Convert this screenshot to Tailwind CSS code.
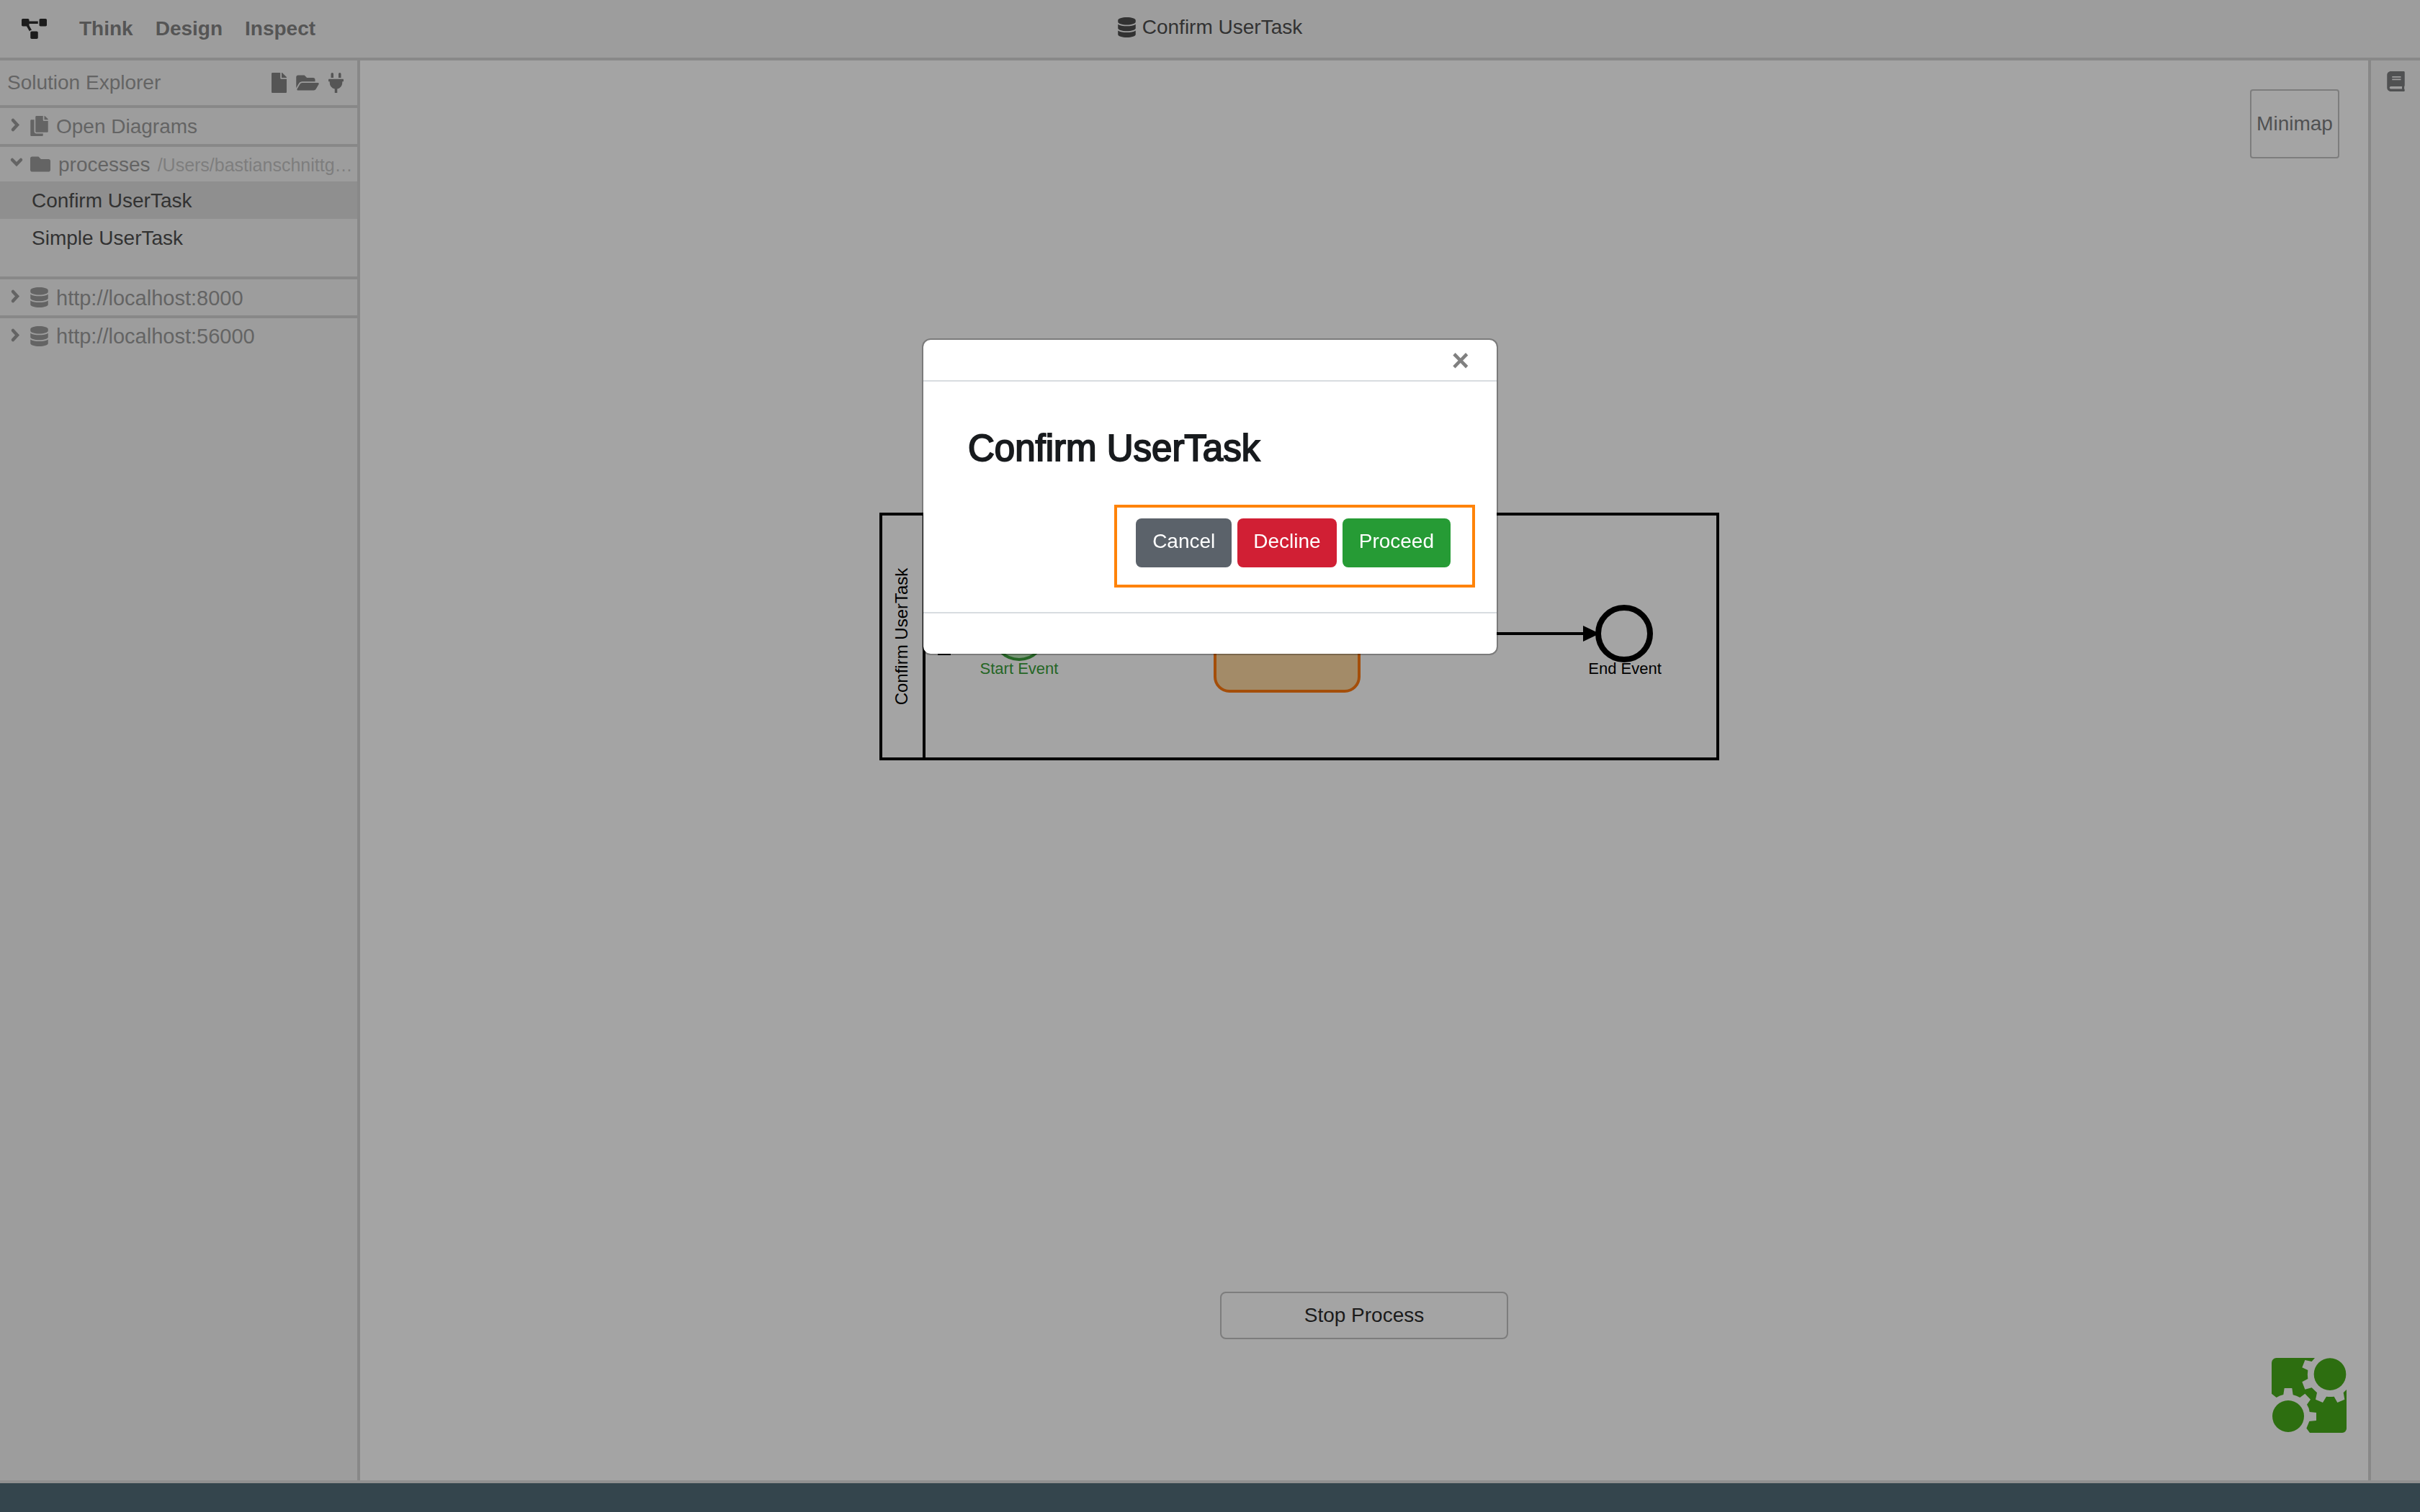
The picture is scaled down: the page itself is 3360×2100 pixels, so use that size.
<!DOCTYPE html>
<html lang="en">
<head>
<meta charset="utf-8">
<title>Confirm UserTask</title>
<script src="https://cdn.jsdelivr.net/npm/@tailwindcss/browser@4"></script>
</head>
<body class="font-['Liberation_Sans',Arial,sans-serif] text-[28px] leading-8 text-[#323232]">
<svg class="hidden" aria-hidden="true">
  <symbol id="database" viewBox="0 0 448 512"><path d="M448 73.143v45.714C448 159.143 347.667 192 224 192S0 159.143 0 118.857V73.143C0 32.857 100.333 0 224 0s224 32.857 224 73.143zM448 176v102.857C448 319.143 347.667 352 224 352S0 319.143 0 278.857V176c48.125 33.143 136.208 48.572 224 48.572S399.874 209.143 448 176zm0 160v102.857C448 479.143 347.667 512 224 512S0 479.143 0 438.857V336c48.125 33.143 136.208 48.572 224 48.572S399.874 369.143 448 336z"/></symbol>
  <symbol id="chevron-right" viewBox="0 0 20 28"><path d="M5 6l6 6.500-6 6.500" fill="none" stroke="currentColor" stroke-width="4.500" stroke-linecap="round" stroke-linejoin="miter"/></symbol>
  <symbol id="chevron-down" viewBox="0 0 20 28"><path d="M4 8l6 6 6-6" fill="none" stroke="currentColor" stroke-width="4.500" stroke-linecap="round" stroke-linejoin="miter"/></symbol>
</svg>

<div class="flex h-screen flex-col bg-[#9d9d9d]">
  <header class="grid h-[84px] shrink-0 grid-cols-[1fr_auto_1fr] items-center border-b-4 border-[#888888]">
    <nav class="flex items-center gap-[31px] pl-[30px] font-bold text-[#555555]">
      <a href="#" aria-label="Home" class="mr-[14px] text-[#1c1c1c]"><svg class="h-7 w-[35px]" viewBox="0 0 640 512" fill="currentColor"><path d="M384 320H256c-17.67 0-32 14.33-32 32v128c0 17.67 14.33 32 32 32h128c17.67 0 32-14.33 32-32V352c0-17.67-14.33-32-32-32zM192 32c0-17.67-14.33-32-32-32H32C14.33 0 0 14.33 0 32v128c0 17.67 14.33 32 32 32h95.72l73.16 128.04C211.98 300.98 232.4 288 256 288h.28L192 175.51V128h224V64H192V32zM608 0H480c-17.67 0-32 14.33-32 32v128c0 17.67 14.33 32 32 32h128c17.67 0 32-14.33 32-32V32c0-17.67-14.33-32-32-32z"/></svg></a>
      <a href="#">Think</a>
      <a href="#">Design</a>
      <a href="#">Inspect</a>
    </nav>
    <div class="flex items-center gap-[9px] pb-1">
      <svg class="h-7 w-[25px]" fill="currentColor"><use href="#database"/></svg>
      <span>Confirm UserTask</span>
    </div>
  </header>

  <div class="flex min-h-0 grow">
    <aside class="w-[500px] shrink-0 border-r-4 border-[#888888] text-[#646464]">
      <div class="flex h-[66px] items-center border-b-4 border-[#888888] pr-[19px] pl-[10px]">
        <h2 class="grow">Solution Explorer</h2>
        <div class="flex items-center gap-[13px] text-[#555555]">
          <button aria-label="New diagram"><svg class="h-7 w-[21px]" viewBox="0 0 384 512" fill="currentColor"><path d="M224 136V0H24C10.7 0 0 10.7 0 24v464c0 13.3 10.7 24 24 24h336c13.3 0 24-10.7 24-24V160H248c-13.2 0-24-10.8-24-24zm160-14.1v6.1H256V0h6.1c6.4 0 12.5 2.5 17 7l97.9 98c4.5 4.5 7 10.6 7 16.9z"/></svg></button>
          <button aria-label="Open folder"><svg class="h-7 w-8" viewBox="0 0 576 512" fill="currentColor"><path d="M572.694 292.093L500.27 416.248A63.997 63.997 0 0 1 444.989 448H45.025c-18.523 0-30.064-20.093-20.731-36.093l72.424-124.155A64 64 0 0 1 152 256h399.964c18.523 0 30.064 20.093 20.73 36.093zM152 224h328v-48c0-26.51-21.49-48-48-48H272l-64-64H48C21.49 64 0 85.49 0 112v278.046l69.077-118.418C86.214 242.25 117.989 224 152 224z"/></svg></button>
          <button aria-label="Connect"><svg class="h-7 w-[21px]" viewBox="0 0 384 512" fill="currentColor"><path d="M320,32a32,32,0,0,0-64,0v96h64Zm48,128H16A16,16,0,0,0,0,176v32a16,16,0,0,0,16,16H32v32A160.07,160.07,0,0,0,160,412.8V512h64V412.8A160.07,160.07,0,0,0,352,256V224h16a16,16,0,0,0,16-16V176A16,16,0,0,0,368,160ZM128,32a32,32,0,0,0-64,0v96h64Z"/></svg></button>
        </div>
      </div>
      <div class="flex h-[54px] items-center border-b-4 border-[#888888] pl-[13px]">
        <svg class="h-7 w-5"><use href="#chevron-right"/></svg>
        <svg class="ml-[9px] h-7 w-[25px]" viewBox="0 0 448 512" fill="currentColor"><path d="M320 448v40c0 13.255-10.745 24-24 24H24c-13.255 0-24-10.745-24-24V120c0-13.255 10.745-24 24-24h72v296c0 30.879 25.121 56 56 56h168zm0-344V0H152c-13.255 0-24 10.745-24 24v368c0 13.255 10.745 24 24 24h272c13.255 0 24-10.745 24-24V128H344c-13.2 0-24-10.8-24-24zm120.971-31.029L375.029 7.029A24 24 0 0 0 358.059 0H352v96h96v-6.059a24 24 0 0 0-7.029-16.97z"/></svg>
        <span class="ml-[11px] pt-0.5">Open Diagrams</span>
      </div>
      <div class="h-[184px] border-b-4 border-[#888888]">
        <div class="flex h-12 items-center pl-[13px]">
          <svg class="h-7 w-5"><use href="#chevron-down"/></svg>
          <svg class="ml-[9px] size-7" viewBox="0 0 512 512" fill="currentColor"><path d="M464 128H272l-64-64H48C21.49 64 0 85.49 0 112v288c0 26.51 21.49 48 48 48h416c26.51 0 48-21.49 48-48V176c0-26.51-21.49-48-48-48z"/></svg>
          <span class="ml-[11px] pt-0.5">processes</span>
          <span class="ml-[10px] pt-0.5 text-[25px] text-[#7e7e7e]">/Users/bastianschnittg…</span>
        </div>
        <ul class="text-[#323232]">
          <li class="flex h-[52px] items-center bg-[#8f8f8f] pt-0.5 pl-11">Confirm UserTask</li>
          <li class="flex h-[52px] items-center pt-0.5 pl-11">Simple UserTask</li>
        </ul>
      </div>
      <div class="flex h-[54px] items-center border-b-4 border-[#888888] pl-[13px]">
        <svg class="h-7 w-5"><use href="#chevron-right"/></svg>
        <svg class="ml-[9px] h-7 w-[25px]" fill="currentColor"><use href="#database"/></svg>
        <span class="ml-[11px] pt-0.5 text-[29px]">http://localhost:8000</span>
      </div>
      <div class="flex h-[50px] items-center pl-[13px]">
        <svg class="h-7 w-5"><use href="#chevron-right"/></svg>
        <svg class="ml-[9px] h-7 w-[25px]" fill="currentColor"><use href="#database"/></svg>
        <span class="ml-[11px] text-[29px]">http://localhost:56000</span>
      </div>
    </aside>

    <main class="relative grow overflow-hidden bg-[#a4a4a4]">
      <svg class="absolute top-[628px] left-[721px] h-[344px] w-[1166px] font-['Liberation_Sans',Arial,sans-serif]" viewBox="0 0 1166 344" fill="none">
        <rect x="2" y="2" width="1162" height="340" stroke="#000" stroke-width="4"/>
        <path d="M62 2V342" stroke="#000" stroke-width="4"/>
        <text transform="translate(39 172) rotate(-90)" text-anchor="middle" font-size="24" fill="#000">Confirm UserTask</text>
        <path d="M81 197H99" stroke="#000" stroke-width="2"/>
        <path d="M234 168H464M668 168H980" stroke="#000" stroke-width="4"/>
        <path d="M977 157L1000 168L977 179Z" fill="#000"/>
        <circle cx="194" cy="168" r="36" fill="#7a9578" stroke="#256625" stroke-width="4"/>
        <text x="194" y="224" text-anchor="middle" font-size="22" fill="#256625">Start Event</text>
        <rect x="466" y="88" width="200" height="160" rx="20" fill="#a38b68" stroke="#a44e0a" stroke-width="4"/>
        <circle cx="1034" cy="168" r="36" stroke="#000" stroke-width="8"/>
        <text x="1035" y="224" text-anchor="middle" font-size="22" fill="#000">End Event</text>
      </svg>
      <button class="absolute top-10 right-10 h-24 w-[124px] rounded border-2 border-[#7d7d7d] text-[#505152]">Minimap</button>
      <button class="absolute bottom-[196px] left-1/2 h-[66px] w-[400px] -translate-x-1/2 rounded-lg border-2 border-[#7d7d7d] text-[#1b1b1b]">Stop Process</button>
      <svg class="absolute right-[30px] bottom-[66px] size-[104px]" viewBox="102 78 312 312" fill="#2d6e10">
        <path d="M122 78H282L269 93L241 87L229 118L253 129Q250 148 253 165L229 178L241 209L269 202L291 223L285 251L315 264L330 239Q346 241 362 239L376 264L406 251L401 223L414 210V372A18 18 0 0 1 396 390H261L247 371L259 342L288 339V306L260 303Q258 285 249 272L264 251L241 227L220 243Q206 235 191 232L187 204H155L151 231Q136 234 122 243L102 227V98A20 20 0 0 1 122 78Z"/>
        <circle cx="345" cy="146" r="67"/>
        <circle cx="171" cy="321" r="66"/>
      </svg>
    </main>

    <aside class="flex w-[72px] shrink-0 justify-center border-l-4 border-[#888888] pt-[15px] text-[#505152]">
      <button aria-label="Properties" class="h-7"><svg class="h-7 w-[25px]" viewBox="0 0 448 512" fill="currentColor"><path d="M448 360V24c0-13.3-10.7-24-24-24H96C43 0 0 43 0 96v320c0 53 43 96 96 96h328c13.3 0 24-10.7 24-24v-16c0-7.5-3.5-14.3-8.9-18.7-4.2-15.4-4.2-59.3 0-74.7 5.4-4.3 8.9-11.1 8.9-18.6zM128 134c0-3.3 2.7-6 6-6h212c3.3 0 6 2.7 6 6v20c0 3.3-2.7 6-6 6H134c-3.3 0-6-2.7-6-6v-20zm0 64c0-3.3 2.7-6 6-6h212c3.3 0 6 2.7 6 6v20c0 3.3-2.7 6-6 6H134c-3.3 0-6-2.7-6-6v-20zm253.4 250H96c-17.7 0-32-14.3-32-32 0-17.6 14.4-32 32-32h285.4c-1.9 17.1-1.9 46.9 0 64z"/></svg></button>
    </aside>
  </div>

  <footer class="h-11 shrink-0 border-t-4 border-[#909090] bg-[#34454d]"></footer>
</div>

<div class="fixed inset-0 flex items-start justify-center pt-[470px]">
  <div role="dialog" aria-labelledby="dialog-title" class="w-[800px] rounded-xl border-2 border-black/25 bg-white bg-clip-padding">
    <div class="flex h-[58px] items-center justify-end border-b-2 border-[#d8dce0] pt-0.5 pr-[38px]">
      <button aria-label="Close" class="text-[42px] font-bold text-[#808080]">×</button>
    </div>
    <div class="flex flex-col pt-[63px] pr-[30px] pb-[34px] pl-[62px]">
      <h1 id="dialog-title" class="text-[51px] leading-[60px] text-[#181b1e] [-webkit-text-stroke:2px]">Confirm UserTask</h1>
      <div class="mt-12 flex gap-2 self-end border-4 border-[#ff8308] pt-[15px] pr-[30px] pb-6 pl-[26px] text-white">
        <button class="h-[68px] rounded-lg bg-[#5b626a] px-[23px] pb-1">Cancel</button>
        <button class="h-[68px] rounded-lg bg-[#d11f34] px-[22px] pb-1">Decline</button>
        <button class="h-[68px] rounded-lg bg-[#269b35] px-[23px] pb-1">Proceed</button>
      </div>
    </div>
    <div class="h-[58px] border-t-2 border-[#d8dce0]"></div>
  </div>
</div>
</body>
</html>
